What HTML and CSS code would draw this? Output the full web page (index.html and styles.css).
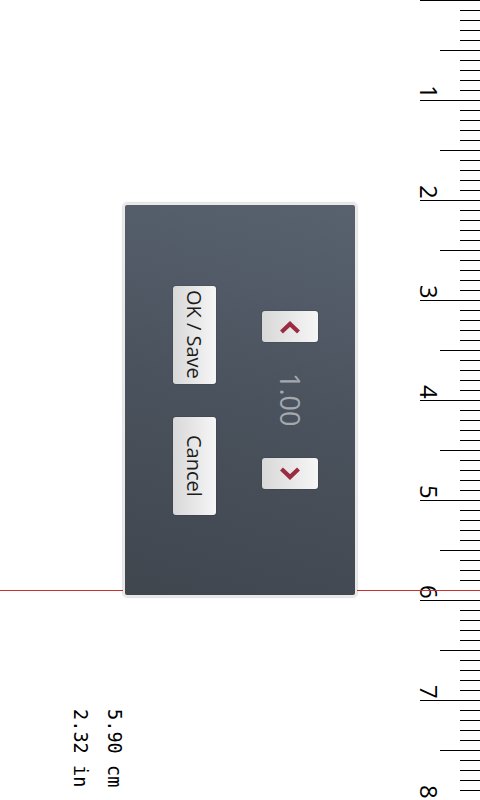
FILE: index.html
```html
<!DOCTYPE html>
<html lang="en">

<head>
    <meta charset="UTF-8">
    <title>Ruler</title>
    <link rel="stylesheet" href="styles.css">
</head>

<body>
    <div class="screen">
        <div class="canvas">
            <div class="readout">
                <span class="readout-line">5.90 cm</span>
                <span class="readout-line">2.32 in</span>
            </div>
        </div>

        <div class="ruler">
            <div class="ruler-cm"><span>1</span></div>
            <div class="ruler-cm"><span>2</span></div>
            <div class="ruler-cm"><span>3</span></div>
            <div class="ruler-cm"><span>4</span></div>
            <div class="ruler-cm"><span>5</span></div>
            <div class="ruler-cm"><span>6</span></div>
            <div class="ruler-cm"><span>7</span></div>
            <div class="ruler-cm"><span>8</span></div>
        </div>

        <!-- measuring line -->
        <div class="marker"></div>

        <div class="overlay">
            <div class="dialog">
                <div class="dialog-actions">
                    <button class="btn btn-text">OK / Save</button>
                    <button class="btn btn-text">Cancel</button>
                </div>
                <div class="spinner">
                    <button class="btn btn-step">
                        <svg width="22" height="14" viewBox="0 0 22 14">
                            <polyline points="2.5,12 11,4 19.5,12" fill="none" stroke="#9b2b41" stroke-width="4.2" />
                        </svg>
                    </button>
                    <div class="spinner-value">1.00</div>
                    <button class="btn btn-step">
                        <svg width="22" height="14" viewBox="0 0 22 14">
                            <polyline points="2.5,2 11,10 19.5,2" fill="none" stroke="#9b2b41" stroke-width="4.2" />
                        </svg>
                    </button>
                </div>
            </div>
        </div>
    </div>
</body>

</html>
```

FILE: styles.css
```css
body {
    margin: 0;
    font-family: "Open Sans", "DejaVu Sans", sans-serif;
}

.screen {
    position: relative;
    display: flex;
    width: 480px;
    height: 800px;
    overflow: hidden;
    background-color: #fff;
}

.canvas {
    flex: 1;
    display: flex;
    flex-direction: column;
    justify-content: flex-end;
    align-items: flex-start;
    padding: 0 0 8px 63px;
}

/* lines are sideways, first line on the right */
.readout {
    display: flex;
    flex-direction: row-reverse;
    font-family: "DejaVu Sans Mono", monospace;
    font-size: 18.6px;
    color: #000;
}

.readout-line {
    writing-mode: vertical-rl;
    width: 34px;
    height: 83px;
    line-height: 34px;
    white-space: pre;
}

/* mm, half-cm and cm ticks */
.ruler {
    width: 64px;
    height: 800px;
    display: flex;
    flex-direction: column;
    background-image:
        repeating-linear-gradient(to bottom, #000 0 1px, transparent 1px 10px),
        repeating-linear-gradient(to bottom, #000 0 1px, transparent 1px 50px),
        repeating-linear-gradient(to bottom, #000 0 1px, transparent 1px 100px);
    background-size: 20px 100%, 40px 100%, 60px 100%;
    background-position: right top;
    background-repeat: no-repeat;
}

.ruler-cm {
    height: 100px;
    display: flex;
    flex-direction: column;
    justify-content: flex-end;
    align-items: flex-start;
    padding-left: 1px;
}

.ruler-cm span {
    writing-mode: vertical-rl;
    font-size: 24px;
    line-height: 24px;
    margin-bottom: 1px;
    color: #000;
}

.marker {
    position: absolute;
    left: 0;
    right: 0;
    top: 589.5px;
    height: 1.5px;
    background-color: #c9302f;
}

.overlay {
    position: absolute;
    inset: 0;
    display: flex;
    align-items: center;
    justify-content: center;
}

.dialog {
    box-sizing: border-box;
    width: 234px;
    height: 394px;
    display: flex;
    align-items: center;
    gap: 46px;
    padding-left: 48px;
    border: 2px solid #e9e9e9;
    border-radius: 4px;
    box-shadow: 0 0 1px 1px rgba(0, 0, 0, 0.12);
    background: linear-gradient(195deg, #58626f 0%, #4a525d 50%, #40464e 100%);
}

.dialog-actions {
    display: flex;
    flex-direction: column;
    gap: 33px;
}

.btn {
    margin: 0;
    padding: 0;
    border: none;
    border-radius: 3px;
    background: linear-gradient(to left, #f6f6f6, #d8d8d8);
    box-shadow: 0 0 0 1px rgba(0, 0, 0, 0.08);
    display: flex;
    align-items: center;
    justify-content: center;
}

.btn-text {
    width: 43px;
    height: 98px;
    writing-mode: vertical-rl;
    font-family: "Open Sans", sans-serif;
    font-size: 20px;
    color: #1c1c1c;
}

.spinner {
    display: flex;
    flex-direction: column;
    align-items: center;
}

.btn-step {
    width: 56px;
    height: 31px;
}

.spinner-value {
    height: 116px;
    display: flex;
    align-items: center;
    justify-content: center;
    writing-mode: vertical-rl;
    font-size: 27px;
    color: #a4a9b0;
}
```
